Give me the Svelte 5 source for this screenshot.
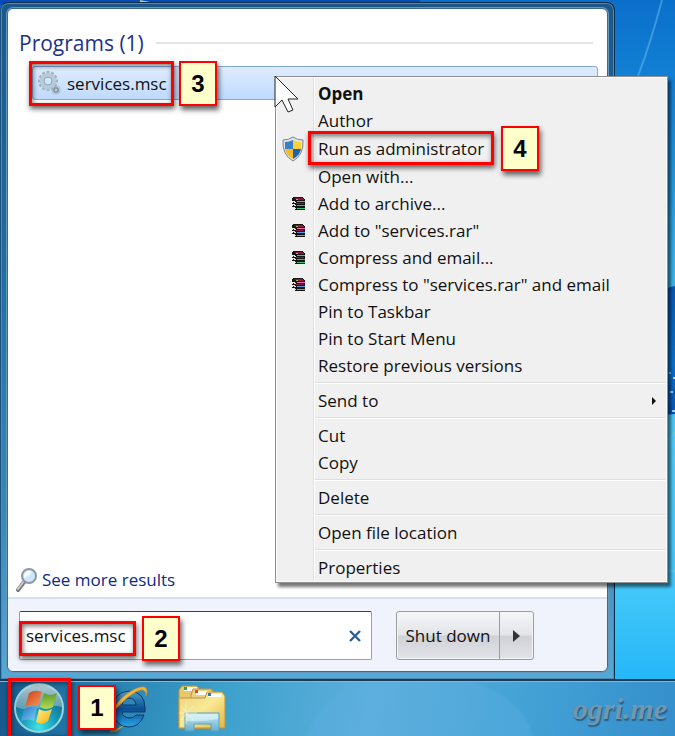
<script>
    let query = 'services.msc';

    const groups = [
        [
            { label: 'Open', bold: true },
            { label: 'Author' },
            { label: 'Run as administrator', icon: 'shield', step: 4 },
            { label: 'Open with...' },
            { label: 'Add to archive...', icon: 'rar' },
            { label: 'Add to "services.rar"', icon: 'rar' },
            { label: 'Compress and email...', icon: 'rar' },
            { label: 'Compress to "services.rar" and email', icon: 'rar' },
            { label: 'Pin to Taskbar' },
            { label: 'Pin to Start Menu' },
            { label: 'Restore previous versions' }
        ],
        [{ label: 'Send to', submenu: true }],
        [{ label: 'Cut' }, { label: 'Copy' }],
        [{ label: 'Delete' }],
        [{ label: 'Open file location' }],
        [{ label: 'Properties' }]
    ];

    const teeth = [0, 30, 60, 90, 120, 150, 180, 210, 240, 270, 300, 330];
</script>

<style>

:global(body) {
    background: #1583d6;
}

.desktop {
    position: relative;
    display: flex;
    flex-direction: column;
    min-height: 100vh;
    overflow: hidden;
    font-family: "Open Sans", "Segoe UI", "Noto Sans", sans-serif;
    font-size: 17px;
    line-height: 27px;
    color: #111;
}

button, input {
    font: inherit;
    color: inherit;
    margin: 0;
    padding: 0;
    border: none;
    background: none;
}

svg {
    display: block;
}

.wallpaper {
    position: absolute;
    inset: 0;
    width: 100%;
    height: 100%;
}

.start-menu {
    position: relative;
    flex: 1;
    display: flex;
    box-sizing: border-box;
    margin: 2px 60px 0 0;
    padding: 5px 6px 7px;
    border: 1px solid #102f4a;
    border-left-color: #1b5480;
    border-bottom: none;
    border-radius: 8px 8px 0 0;
    background: linear-gradient(#1d5789, #23699f 35%, #3a87b7 75%, #55a9d6);
    box-shadow: inset 0 0 0 1px #4f88b0;
}

.panel {
    flex: 1;
    display: flex;
    flex-direction: column;
    border: 1px solid #3c6a8c;
    border-radius: 6px;
    background: #fff;
    box-shadow: 0 0 0 1px #6298bb;
}

.heading {
    display: flex;
    align-items: center;
    gap: 12px;
    margin: 20px 14px 9px 11px;
    font-size: 21px;
    font-weight: normal;
    line-height: 28px;
    color: #1e3287;
}

.heading::after {
    content: "";
    flex: 1;
    height: 2px;
    background: #e2e4e4;
}

.result {
    position: relative;
    display: flex;
    margin: 0 9px 0 24px;
    border: 1px solid #84a9d8;
    border-radius: 3px;
    background: linear-gradient(#dfecfd, #bfdafd);
}

.result button {
    flex: 1;
    display: flex;
    align-items: center;
    gap: 5px;
    height: 32px;
    padding-left: 4px;
    text-align: left;
}

.more {
    display: flex;
    align-items: center;
    gap: 3px;
    margin: auto 7px 4px;
    color: #0b2a86;
    text-decoration: none;
}

.search {
    display: flex;
    padding: 12px 73px 11px 11px;
    border-top: 2px solid #d3e0f0;
    border-radius: 0 0 6px 6px;
    background: #f0f3fb;
}

.box {
    position: relative;
    flex: 1;
    display: flex;
    box-sizing: border-box;
    height: 49px;
    margin-right: 24px;
    border: 1px solid #9b9fa5;
    border-top-color: #3d3f43;
    border-radius: 2px;
    background: #fff;
}

.box input {
    flex: 1;
    min-width: 0;
    padding-left: 6px;
    outline: none;
}

.clear {
    width: 32px;
    display: grid;
    place-items: center;
}

.power {
    display: flex;
    box-sizing: border-box;
    height: 49px;
    border: 1px solid #9a9ca3;
    border-radius: 3px;
    background: linear-gradient(#f5f6f8, #e3e4e8 49%, #cfd1d7 51%, #e2e3e8);
    box-shadow: inset 0 0 0 1px #f4f5f7;
}

.power button {
    width: 102px;
}

.power .arrow {
    display: grid;
    place-items: center;
    width: 34px;
    border-left: 1px solid #9a9ca3;
}

.taskbar {
    position: relative;
    display: flex;
    align-items: center;
    box-sizing: border-box;
    height: 57px;
    padding: 0 8px 0 14px;
    border-top: 2px solid #183a52;
    background:
        radial-gradient(ellipse 115px 70px at 420px 62px, #5aaee066 96%, transparent),
        linear-gradient(100deg, #17598c, #277fb0 15%, #3ba0cb 32%, #5eafdc 55%, #46a3d6 75%, #348fcc);
    box-shadow: inset 0 1px 0 #7dbbdc;
}

.ie {
    margin-left: 46px;
}

.folder {
    margin-left: 30px;
}

.watermark {
    margin-left: auto;
    font-family: "Liberation Serif", serif;
    font-size: 30px;
    font-style: italic;
    font-weight: bold;
    color: #7397af;
    text-shadow: 1px 2px 1px #2b5d83;
}

.context {
    position: absolute;
    left: 275px;
    top: 76px;
    box-sizing: border-box;
    width: 393px;
    padding: 3px 2px 1px;
    border: 1px solid #909090;
    background: linear-gradient(90deg, transparent 37px, #dfe0e0 37px, #dfe0e0 38px, #fff 38px, #fff 39px, transparent 39px) #f0f0f0;
    box-shadow: inset 0 0 0 1px #fafafa, 3px 4px 3px #0008;
}

.context ul {
    margin: 0;
    padding: 0;
    list-style: none;
}

.context ul + ul::before {
    content: "";
    display: block;
    margin: 3px 0 3px 37px;
    border-top: 1px solid #dedede;
    border-bottom: 1px solid #fff;
}

.context li {
    position: relative;
}

.context li button {
    display: flex;
    align-items: center;
    width: 100%;
    height: 27px;
    text-align: left;
}

.context li.stepped button {
    height: 29px;
}

.icon {
    display: grid;
    justify-items: center;
    width: 30px;
    padding-right: 10px;
}

.rar {
    margin-left: 12px;
}

.bold {
    font-weight: bold;
}

.submenu {
    margin: 0 9px 0 auto;
}

.pointer {
    position: absolute;
    left: 273px;
    top: 74px;
}

.mark {
    position: absolute;
    box-sizing: border-box;
    border: 3px solid #f00;
    box-shadow: 1px 3px 5px #0009, inset 1px 2px 5px #0008;
    pointer-events: none;
}

.step {
    position: absolute;
    box-sizing: border-box;
    width: 38px;
    height: 45px;
    border: 2px solid #f00;
    background: #ffffcb;
    box-shadow: 2px 4px 5px #0009;
    font: bold 24px/41px "Liberation Sans", Arial, sans-serif;
    text-align: center;
    color: #000;
}

.result .mark {
    left: -4px;
    top: -6px;
    width: 145px;
    height: 45px;
}

.result .step {
    left: 146px;
    top: -6px;
}

.box .mark {
    left: -1px;
    top: 9px;
    width: 117px;
    height: 35px;
}

.box .step {
    left: 122px;
    top: 4px;
}

.context .mark {
    left: 30px;
    top: -3px;
    width: 186px;
    height: 34px;
}

.context .step {
    left: 223px;
    top: -8px;
}

.taskbar .mark {
    left: 8px;
    top: -3px;
    width: 63px;
    height: 60px;
}

.taskbar .step {
    left: 78px;
    top: 4px;
}

</style>

<main class="desktop">
    <svg class="wallpaper" viewBox="0 0 675 736" preserveAspectRatio="none" aria-hidden="true">
        <defs>
            <linearGradient id="sky" x2="0" y2="1">
                <stop offset="0" stop-color="#0b6fca" />
                <stop offset=".17" stop-color="#168bdc" />
                <stop offset=".37" stop-color="#38b4eb" />
                <stop offset=".6" stop-color="#4ccbf8" />
                <stop offset=".8" stop-color="#42c7f9" />
                <stop offset=".92" stop-color="#26b7f8" />
            </linearGradient>
            <linearGradient id="flag" x2="0" y2="1">
                <stop offset="0" stop-color="#0858b5" />
                <stop offset=".6" stop-color="#0a72d0" />
                <stop offset="1" stop-color="#0754b2" />
            </linearGradient>
        </defs>
        <path d="M0 0H675V736H0z" fill="url(#sky)" />
        <path d="M0 0H420V5H0z" fill="#074bb8" />
        <path d="M140 0l10 2h32l-6 5h-36z" fill="#b8ca9e" />
        <path d="M662 0Q650 45 638 76" fill="none" stroke="#68bff0" stroke-width="2" opacity=".5" />
        <path d="M660 292Q668 287 675 286V414Q667 414 660 417z" fill="url(#flag)" />
        <path d="M669 373h2M673 378h2M670 392h3M672 411h3" stroke="#9bd5fa" stroke-width="2" />
        <path d="M669 440l6-8M669 571h6" stroke="#76dfca" opacity=".7" />
    </svg>

    <section class="start-menu">
        <div class="panel">
            <h2 class="heading">Programs (1)</h2>
            <div class="result">
                <button>
                    <svg width="25" height="27" viewBox="0 0 25 27">
                        <g fill="none" stroke="#9fb5c3">
                            {#each teeth as angle}
                                <path d="M11 1v4" stroke-width="3" transform="rotate({angle} 11 11)" />
                                <path d="M19 15v3" stroke-width="1" transform="rotate({angle} 19 20)" />
                            {/each}
                            <circle cx="11" cy="11" r="6" stroke="#b7cad7" stroke-width="4" />
                            <circle cx="11" cy="11" r="4" stroke="#8ca8ba" />
                            <circle cx="19" cy="20" r="2" stroke="#8f9da6" stroke-width="2" />
                        </g>
                    </svg>
                    services.msc
                </button>
                <span class="mark"></span>
                <span class="step">3</span>
            </div>
            <a class="more" href="#results">
                <svg width="24" height="26" viewBox="0 0 24 26">
                    <path d="M9 15L3 23" stroke="#777" stroke-width="4" stroke-linecap="round" />
                    <path d="M9 14L3 22" stroke="#ccc" stroke-width="2" stroke-linecap="round" />
                    <circle cx="14" cy="9" r="7" fill="#cfe7fb" stroke="#8d98a3" stroke-width="2" />
                    <path d="M9 8Q11 3 16 4Q17 8 9 11z" fill="#f4fbff" />
                </svg>
                See more results
            </a>
            <form class="search" on:submit|preventDefault>
                <div class="box">
                    <input type="text" aria-label="Search programs and files" bind:value={query} />
                    <button class="clear" type="button" aria-label="Clear" on:click={() => query = ''}>
                        <svg width="12" height="12" viewBox="0 0 12 12">
                            <path d="M1 1l10 10M11 1L1 11" stroke="#2a6294" stroke-width="2.4" />
                        </svg>
                    </button>
                    <span class="mark"></span>
                    <span class="step">2</span>
                </div>
                <div class="power">
                    <button type="button">Shut down</button>
                    <button class="arrow" type="button" aria-label="Shut down options">
                        <svg width="7" height="12" viewBox="0 0 7 12"><path d="M0 0l7 6-7 6z" fill="#333" /></svg>
                    </button>
                </div>
            </form>
        </div>
    </section>

    <nav class="taskbar">
        <button aria-label="Start">
            <svg width="50" height="52" viewBox="0 0 50 52">
                <defs>
                    <radialGradient id="orb" cx=".5" cy=".9" r=".9">
                        <stop offset="0" stop-color="#43e5e4" />
                        <stop offset=".4" stop-color="#169bbb" />
                        <stop offset="1" stop-color="#164f70" />
                    </radialGradient>
                    <linearGradient id="gloss" x2="0" y2="1">
                        <stop offset="0" stop-color="#d5e3e8" stop-opacity=".85" />
                        <stop offset="1" stop-color="#9cbecb" stop-opacity=".5" />
                    </linearGradient>
                    <linearGradient id="red" x2="1" y2="1"><stop stop-color="#c63d1b" /><stop offset="1" stop-color="#ff9855" /></linearGradient>
                    <linearGradient id="green" x2="0" y2="1"><stop stop-color="#5b9b28" /><stop offset="1" stop-color="#b6dc54" /></linearGradient>
                    <linearGradient id="blue" x2="1" y2="1"><stop stop-color="#2871c1" /><stop offset="1" stop-color="#79d3fa" /></linearGradient>
                    <linearGradient id="yellow" x2="1" y2="1"><stop stop-color="#fff080" /><stop offset="1" stop-color="#f6ac16" /></linearGradient>
                </defs>
                <circle cx="25" cy="25" r="24" fill="url(#orb)" stroke="#95d5df" stroke-width="2" />
                <path d="M2 24A23 23 0 0 1 48 24Q36 21 25 25T2 24z" fill="url(#gloss)" />
                <path d="M15 10Q21 6 28 9L24 23Q18 20 11 24z" fill="url(#red)" />
                <path d="M30 10Q36 14 43 10L39 24Q32 28 26 24z" fill="url(#green)" />
                <path d="M10 26Q17 22 23 25L20 38Q14 35 7 38z" fill="url(#blue)" />
                <path d="M25 26Q31 30 38 26L34 38Q28 43 22 39z" fill="url(#yellow)" />
            </svg>
        </button>
        <button class="ie" aria-label="Internet Explorer">
            <svg width="38" height="50" viewBox="0 0 38 50">
                <defs>
                    <linearGradient id="edge" x2="0" y2="1">
                        <stop offset="0" stop-color="#4b9dcc" />
                        <stop offset=".5" stop-color="#0b4f93" />
                        <stop offset="1" stop-color="#26a6e9" />
                    </linearGradient>
                </defs>
                <path d="M35 28H12Q13 34 20 34Q24 34 26 31H34Q30 43 18 43Q4 42 3 26Q3 8 19 7Q35 8 35 24zM12 21H26Q25 14 19 14Q13 15 12 21z" fill="url(#edge)" stroke="#0a3969" stroke-width="1" fill-rule="evenodd" />
                <path d="M3 28Q5 18 18 9Q32 0 36 4Q38 7 36 12Q36 5 31 6Q21 8 3 28z" fill="#efb83a" stroke="#bd872b" stroke-width=".6" />
                <path d="M1 42Q-2 50 14 41Q6 50 0 48z" fill="#d9ac43" />
            </svg>
        </button>
        <button class="folder" aria-label="Windows Explorer">
            <svg width="48" height="48" viewBox="0 0 48 48">
                <defs>
                    <linearGradient id="manila" x2="1" y2="1">
                        <stop offset="0" stop-color="#efd27b" />
                        <stop offset=".5" stop-color="#f8e996" />
                        <stop offset="1" stop-color="#e2b43f" />
                    </linearGradient>
                    <linearGradient id="glass" x2="0" y2="1">
                        <stop offset="0" stop-color="#c4eaf1" />
                        <stop offset="1" stop-color="#68afd5" />
                    </linearGradient>
                </defs>
                <g stroke="#bd9443">
                    <path d="M1 43V5l3-4h15l3 4h13v38z" fill="#e9c76b" />
                    <path d="M6 2h13v4H6z" fill="#fff" stroke="none" />
                    <path d="M13 10l2-6h18l3 5v34H13z" fill="#eccf79" />
                    <path d="M18 6h13v4H18z" fill="#fff" stroke="none" />
                    <path d="M1 13h26l2-6h15l3 4v32H1z" fill="url(#manila)" />
                    <path d="M31 9h12v3H30z" fill="#fff" stroke="none" />
                </g>
                <path d="M6 2h3v3H6z" fill="#33a144" />
                <path d="M17 5h3v3h-3z" fill="#e44a1f" />
                <path d="M30 8h3v3h-3z" fill="#1f7dbd" />
                <path d="M7 28h34v18h-8v-7H16v7H7z" fill="url(#glass)" stroke="#5e9ebc" />
                <path d="M8 29h32v5Q26 37 8 36z" fill="#e2f7f8" opacity=".6" />
                <path d="M8 17v22M1 28h18M3 21l12 14M15 21L3 35" stroke="#fffde2" opacity=".6" />
            </svg>
        </button>
        <span class="watermark">ogri.me</span>
        <span class="mark"></span>
        <span class="step">1</span>
    </nav>

    <div class="context">
        {#each groups as items}
            <ul>
                {#each items as item}
                    <li class:stepped={item.step}>
                        <button class:bold={item.bold}>
                            <span class="icon">
                                {#if item.icon == 'shield'}
                                    <svg width="22" height="26" viewBox="0 0 22 26">
                                        <path d="M11 1Q15 4 21 4Q22 19 11 25Q0 19 1 4Q7 4 11 1z" fill="#e2e5e8" stroke="#7b858f" />
                                        <path d="M11 4v9H3V6Q7 6 11 4z" fill="#367fcd" />
                                        <path d="M11 4v9h8V6Q15 6 11 4z" fill="#f8d137" />
                                        <path d="M3 13h8v10Q4 19 3 13z" fill="#f2bc22" />
                                        <path d="M19 13h-8v10Q18 19 19 13z" fill="#1f62b3" />
                                    </svg>
                                {:else if item.icon == 'rar'}
                                    <svg class="rar" width="14" height="14" viewBox="0 0 14 14" shape-rendering="crispEdges">
                                        <path d="M1 0h9l3 3v10H4L0 10V9l1-1-1-2 1-1-1-2z" fill="#151515" />
                                        <path d="M2 1h8l2 2H4z" fill="#8b1739" />
                                        <path d="M5 4.500h8" stroke="#e66ab3" />
                                        <path d="M4 6.500h8" stroke="#8b1739" />
                                        <path d="M5 8.500h8" stroke="#4c9ee0" />
                                        <path d="M5 11.500h8" stroke="#2cca77" />
                                        <path d="M1 4l3 2M1 7l3 2M1 10l3 2" stroke="#e5e5e5" />
                                        <path d="M4 2h2" stroke="#b8b52c" />
                                    </svg>
                                {/if}
                            </span>
                            {item.label}
                            {#if item.submenu}
                                <svg class="submenu" width="4" height="8" viewBox="0 0 4 8"><path d="M0 0l4 4-4 4z" fill="#111" /></svg>
                            {/if}
                        </button>
                        {#if item.step}
                            <span class="mark"></span>
                            <span class="step">{item.step}</span>
                        {/if}
                    </li>
                {/each}
            </ul>
        {/each}
    </div>

    <svg class="pointer" width="27" height="40" viewBox="0 0 27 40" aria-hidden="true">
        <path d="M2 2V33L9 26L15 38L20 36L15 25H25z" fill="#fff" stroke="#222" />
    </svg>
</main>
